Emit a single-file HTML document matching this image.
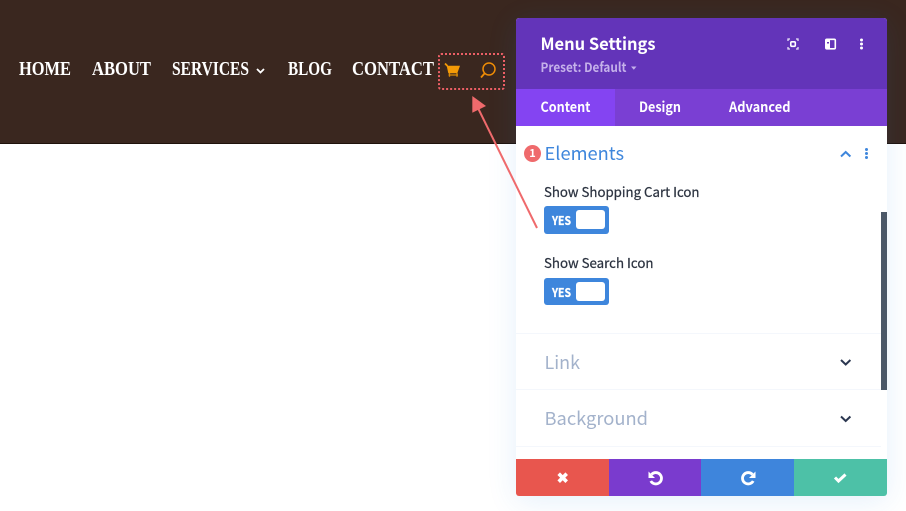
<!DOCTYPE html>
<html><head><meta charset="utf-8">
<style>
html,body{margin:0;padding:0;width:906px;height:511px;overflow:hidden;background:#fff}
body{position:relative;font-family:"Liberation Sans",sans-serif}
.a{position:absolute;white-space:nowrap}
#hdr{left:0;top:0;width:906px;height:143px;background:#3a271f;border-bottom:1px solid #1f120c}
#panel{left:516px;top:18px;width:371px;height:478px;background:#fff;border-radius:3px;box-shadow:0 5px 30px rgba(43,135,218,.12)}
.tg{left:544px;width:65px;background:#3e86dc;border-radius:3px}
.tg i{position:absolute;left:32px;top:4px;width:29px;height:19px;background:#fff;border-radius:3px}
.ln{left:516px;width:365px;height:1px;background:#f4f7fc}
.btn{top:459px;height:37px}
svg text{font-family:"Noto Sans CJK SC","Liberation Sans",sans-serif}
svg text.n{font-family:"Liberation Serif",serif;font-weight:700;font-size:19.5px;fill:#fff}
</style></head>
<body>
<div class="a" id="hdr"></div>
<div class="a" id="panel"></div>
<div class="a" style="left:516px;top:18px;width:371px;height:71px;background:#6334b9;border-radius:3px 3px 0 0"></div>
<div class="a" style="left:516px;top:89px;width:371px;height:37px;background:#7a3fd3"></div>
<div class="a" style="left:516px;top:89px;width:99px;height:37px;background:#8444f2"></div>
<div class="a tg" style="top:206px;height:28px"><i></i></div>
<div class="a tg" style="top:278px;height:27px"><i></i></div>
<div class="a" style="left:881px;top:212px;width:6px;height:178px;background:#4b5868"></div>
<div class="a ln" style="top:333px"></div>
<div class="a ln" style="top:389px"></div>
<div class="a ln" style="top:446px"></div>
<div class="a btn" style="left:516px;width:93px;background:#e8564e;border-radius:0 0 0 3px"></div>
<div class="a btn" style="left:609px;width:92px;background:#7a3bce"></div>
<div class="a btn" style="left:701px;width:93px;background:#3e85dc"></div>
<div class="a btn" style="left:794px;width:93px;background:#4dc1a7;border-radius:0 0 3px 0"></div>
<div class="a" style="left:524px;top:145px;width:17px;height:17px;border-radius:50%;background:#ef6a6c"></div>

<svg class="a" style="left:0;top:0" width="906" height="511" viewBox="0 0 906 511">
<text class="n" x="19" y="75" textLength="52" lengthAdjust="spacingAndGlyphs">HOME</text>
<text class="n" x="92" y="75" textLength="59" lengthAdjust="spacingAndGlyphs">ABOUT</text>
<text class="n" x="172" y="75" textLength="77" lengthAdjust="spacingAndGlyphs">SERVICES</text>
<text class="n" x="288" y="75" textLength="44" lengthAdjust="spacingAndGlyphs">BLOG</text>
<text class="n" x="352" y="75" textLength="82" lengthAdjust="spacingAndGlyphs">CONTACT</text>
<path d="M257 69l3.500 3.500 3.500-3.500" fill="none" stroke="#fff" stroke-width="1.800"/>
<rect x="439" y="54" width="65" height="35" rx="2" fill="none" stroke="#ec5f66" stroke-width="2" stroke-dasharray="2 2"/>
<path d="M445 63.500l2.500 2.500" stroke="#f49a06" stroke-width="1.800" fill="none"/>
<path d="M446.700 65.700h13.300l-2.700 7.600h-9z" fill="#f49a06"/>
<path d="M449.500 73v3.700M457 73v3.700M448.500 75h9.500" fill="none" stroke="#d98a08" stroke-width="1.300"/>
<circle cx="489" cy="69" r="6" fill="none" stroke="#ee8c06" stroke-width="1.500"/>
<path d="M484.500 73.500L481 77.500" stroke="#ee8c06" stroke-width="1.800" fill="none"/>

<text x="540.500" y="50" font-size="17" font-weight="700" fill="#fff" textLength="115" lengthAdjust="spacingAndGlyphs">Menu Settings</text>
<text x="540.500" y="72" font-size="13" font-weight="700" fill="#c5b1ea" textLength="86" lengthAdjust="spacingAndGlyphs">Preset: Default</text>
<path d="M631 66.500h5.500l-2.700 3.200z" fill="#c5b1ea"/>
<text x="540.500" y="112" font-size="14" font-weight="700" fill="#fff" textLength="50" lengthAdjust="spacingAndGlyphs">Content</text>
<text x="639" y="112" font-size="14" font-weight="700" fill="#fff" textLength="42" lengthAdjust="spacingAndGlyphs">Design</text>
<text x="729" y="112" font-size="14" font-weight="700" fill="#fff" textLength="61.500" lengthAdjust="spacingAndGlyphs">Advanced</text>
<path d="M788 41v-2h2M796 39h2v2M798 47v2h-2M790 49h-2v-2" fill="none" stroke="#e9e2f7" stroke-width="1.300"/>
<rect x="790.800" y="41.800" width="4.500" height="4.500" rx="1" fill="none" stroke="#fff" stroke-width="1.600"/>
<rect x="825.800" y="39.300" width="9.500" height="9.500" rx="1" fill="none" stroke="#fff" stroke-width="1.600"/>
<rect x="826" y="39.500" width="4" height="9" fill="#fff"/>
<rect x="827" y="42" width="2" height="1.500" fill="#6334b9"/>
<circle cx="861.500" cy="40" r="1.500" fill="#fff"/><circle cx="861.500" cy="44" r="1.500" fill="#fff"/><circle cx="861.500" cy="48" r="1.500" fill="#fff"/>

<text x="532.500" y="157" font-size="11" font-weight="700" fill="#fff" text-anchor="middle">1</text>
<text x="544.500" y="160" font-size="18" fill="#3e86dc" textLength="79.500" lengthAdjust="spacingAndGlyphs">Elements</text>
<path d="M841 156.500l4.700-4.500 4.700 4.500" fill="none" stroke="#3e86dc" stroke-width="2"/>
<circle cx="866.500" cy="149.500" r="1.500" fill="#3e86dc"/><circle cx="866.500" cy="153.500" r="1.500" fill="#3e86dc"/><circle cx="866.500" cy="157.500" r="1.500" fill="#3e86dc"/>

<text x="544" y="197" font-size="13.500" fill="#2c3340" stroke="#2c3340" stroke-width=".25" textLength="155.500" lengthAdjust="spacingAndGlyphs">Show Shopping Cart Icon</text>
<text x="552" y="225" font-size="12" font-weight="700" fill="#fff" stroke="#fff" stroke-width=".3" textLength="19" lengthAdjust="spacingAndGlyphs">YES</text>
<text x="544" y="268" font-size="13.500" fill="#2c3340" stroke="#2c3340" stroke-width=".25" textLength="109.500" lengthAdjust="spacingAndGlyphs">Show Search Icon</text>
<text x="552" y="297" font-size="12" font-weight="700" fill="#fff" stroke="#fff" stroke-width=".3" textLength="19" lengthAdjust="spacingAndGlyphs">YES</text>

<text x="544.500" y="369" font-size="18" fill="#a3b2cb" textLength="35.500" lengthAdjust="spacingAndGlyphs">Link</text>
<text x="544.500" y="425" font-size="18" fill="#a3b2cb" textLength="103.500" lengthAdjust="spacingAndGlyphs">Background</text>
<path d="M841 360l4.700 4.500 4.700-4.500M841 416.500l4.700 4.500 4.700-4.500" fill="none" stroke="#2b3750" stroke-width="2"/>

<path d="M558.700 473.700l8 8M566.700 473.700l-8 8" stroke="#fff" stroke-width="3.600" fill="none"/>
<path d="M648.500 471.500v6.500h6.500z" fill="#fff"/>
<path d="M651.500 474.500A5.700 5.700 0 1 1 650.800 481" fill="none" stroke="#fff" stroke-width="2.800"/>
<path d="M755.500 471.500v6.500h-6.500z" fill="#fff"/>
<path d="M752.500 474.500A5.700 5.700 0 1 0 753.200 481" fill="none" stroke="#fff" stroke-width="2.800"/>
<path d="M835 477.500l3.500 3.500 7-6.500" stroke="#fff" stroke-width="3" fill="none"/>

<path d="M537 228L477 106" stroke="#ef6a6c" stroke-width="2" fill="none"/>
<path d="M472.300 96v16.700L486 106z" fill="#ef6a6c"/>
</svg>
</body></html>
